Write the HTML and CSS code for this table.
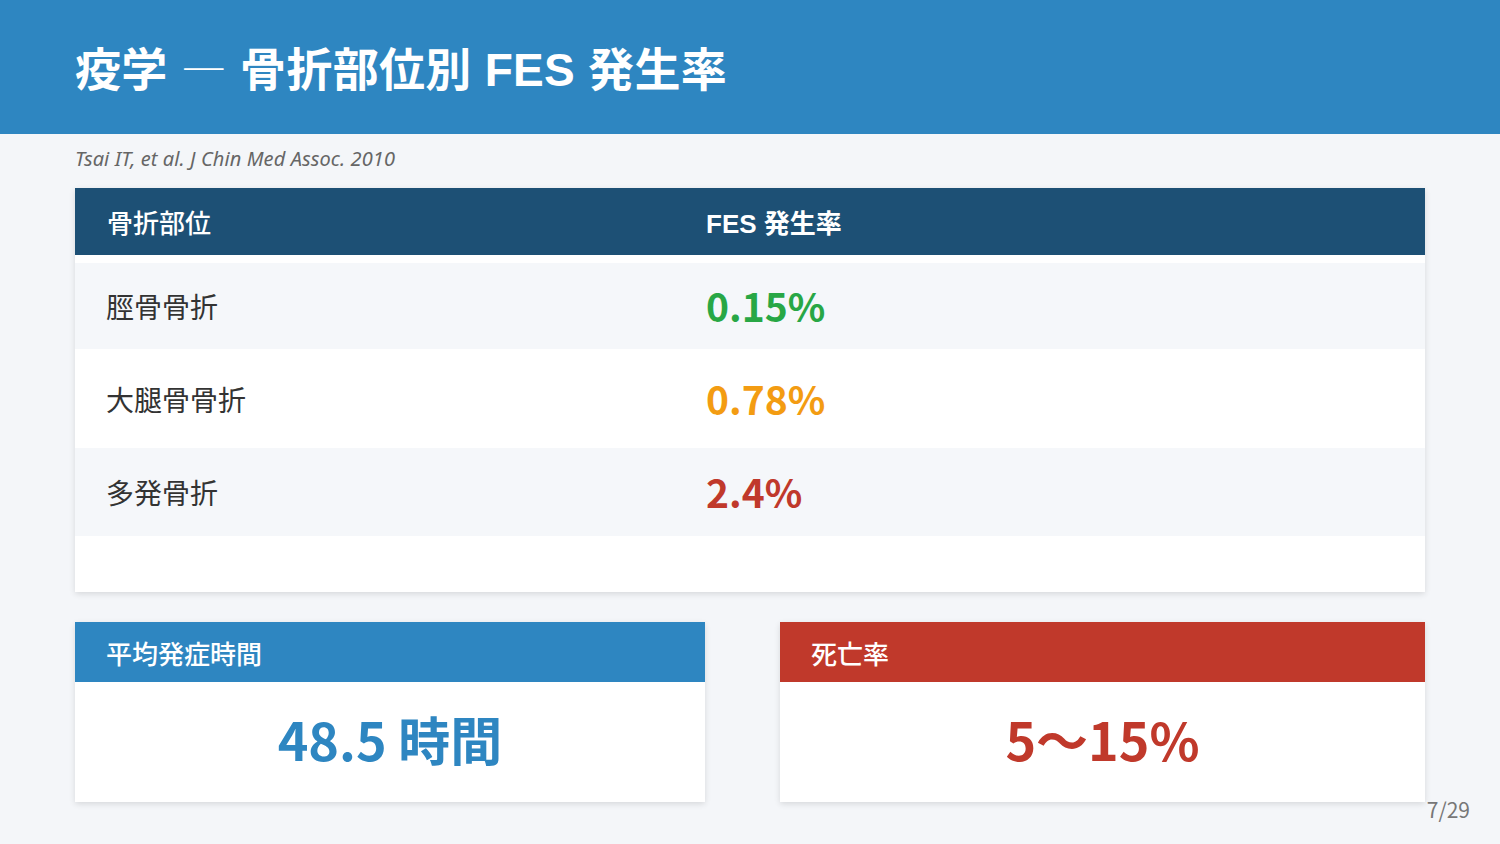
FILE: index.html
```html
<!DOCTYPE html>
<html lang="ja">
<head>
<meta charset="utf-8">
<link rel="stylesheet" href="styles.css">
</head>
<body>
<div class="slide">
  <header class="topbar">
    <h1 class="title">疫学 <span class="dash">—</span> 骨折部位別 FES 発生率</h1>
  </header>
  <main class="content">
    <p class="cite">Tsai IT, et al. J Chin Med Assoc. 2010</p>
    <section class="table-card">
      <div class="thead">
        <div class="th th-first">骨折部位</div>
        <div class="th th-latin">FES 発生率</div>
      </div>
      <div class="tbody">
        <div class="tr tr-alt r1">
          <div class="td">脛骨骨折</div>
          <div class="td num green">0.15%</div>
        </div>
        <div class="tr r2">
          <div class="td">大腿骨骨折</div>
          <div class="td num orange">0.78%</div>
        </div>
        <div class="tr tr-alt r3">
          <div class="td">多発骨折</div>
          <div class="td num red">2.4%</div>
        </div>
      </div>
    </section>
    <section class="stats">
      <div class="stat">
        <div class="stat-head blue-bg">平均発症時間</div>
        <div class="stat-body blue">48.5 時間</div>
      </div>
      <div class="stat">
        <div class="stat-head red-bg">死亡率</div>
        <div class="stat-body red">5〜15%</div>
      </div>
    </section>
  </main>
  <div class="pager">7/29</div>
</div>
</body>
</html>
```
FILE: styles.css
```css
* { box-sizing: border-box; }
html, body { margin: 0; padding: 0; }
body {
  width: 1500px;
  height: 844px;
  background: #f4f6f9;
  font-family: "Noto Sans CJK JP", "Noto Sans", sans-serif;
  color: #333;
  overflow: hidden;
}
.slide {
  position: relative;
  width: 1500px;
  height: 844px;
}
.topbar {
  height: 134px;
  background: #2e86c1;
  display: flex;
  align-items: center;
  padding: 0 75px;
}
.title {
  margin: 0;
  color: #fff;
  font-family: "Liberation Sans", "Noto Sans CJK JP", sans-serif;
  font-weight: 700;
  font-size: 46px;
  letter-spacing: 0.3px;
  line-height: 1;
  padding-top: 1px;
}
.dash {
  font-family: "Noto Sans CJK JP", sans-serif;
  font-weight: 300;
}
.content {
  padding: 0 75px;
}
.cite {
  margin: 0;
  height: 54px;
  padding-top: 13px;
  font-family: "Noto Sans", sans-serif;
  font-style: italic;
  font-size: 20px;
  letter-spacing: 0.1px;
  line-height: 24px;
  color: #666;
}
.table-card {
  background: #fff;
  box-shadow: 0 2px 6px rgba(0, 0, 0, 0.12);
  padding-bottom: 56px;
}
.thead {
  display: grid;
  grid-template-columns: 599px 1fr;
  height: 67px;
  background: #1d5075;
  align-items: center;
}
.th {
  padding-left: 32px;
  color: #fff;
  font-family: "Liberation Sans", "Noto Sans CJK JP", sans-serif;
  font-weight: 700;
  font-size: 26px;
}
.th-first {
  font-family: "Noto Sans CJK JP", sans-serif;
  font-weight: 500;
}
.tbody {
  padding-top: 8px;
}
.tr {
  display: grid;
  grid-template-columns: 599px 1fr;
  align-items: center;
}
.r1 { height: 86px; }
.r2 { height: 99px; }
.r3 { height: 88px; }
.tr-alt { background: #f5f7fa; }
.td {
  padding-left: 31px;
  font-size: 28px;
  color: #333;
}
.num {
  font-size: 39px;
  font-weight: 700;
  padding-left: 32px;
  padding-bottom: 2px;
}
.green { color: #28a745; }
.orange { color: #f39c12; }
.red { color: #c0392b; }
.blue { color: #2e86c1; }
.stats {
  margin-top: 30px;
  display: grid;
  grid-template-columns: 630px 1fr;
  gap: 75px;
}
.stat {
  background: #fff;
  box-shadow: 0 2px 6px rgba(0, 0, 0, 0.12);
}
.stat-head {
  height: 60px;
  display: flex;
  align-items: center;
  padding-left: 31px;
  color: #fff;
  font-size: 26px;
  font-weight: 500;
}
.blue-bg { background: #2e86c1; }
.red-bg { background: #c0392b; }
.stat-body {
  height: 120px;
  display: flex;
  align-items: center;
  justify-content: center;
  font-size: 52px;
  font-weight: 700;
  padding-bottom: 8px;
}
.pager {
  position: absolute;
  right: 30px;
  bottom: 20px;
  font-size: 21px;
  color: #777;
}
```
